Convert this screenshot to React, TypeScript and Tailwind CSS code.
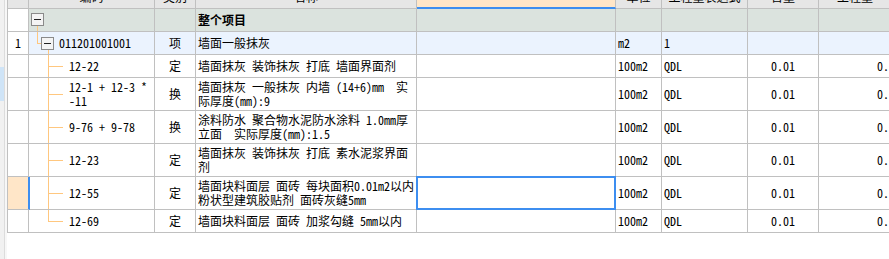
import React from "react";

type Row = {
  code: string[];
  type: string;
  name: string[];
  unit: string;
  expr: string;
  qty: string;
  last: string;
};

const children: Row[] = [
  { code: ["12-22"], type: "定", name: ["墙面抹灰 装饰抹灰 打底 墙面界面剂"], unit: "100m2", expr: "QDL", qty: "0.01", last: "0.01" },
  { code: ["12-1 + 12-3 *", "-11"], type: "换", name: ["墙面抹灰 一般抹灰 内墙 (14+6)mm  实", "际厚度(mm):9"], unit: "100m2", expr: "QDL", qty: "0.01", last: "0.01" },
  { code: ["9-76 + 9-78"], type: "换", name: ["涂料防水 聚合物水泥防水涂料 1.0mm厚", "立面  实际厚度(mm):1.5"], unit: "100m2", expr: "QDL", qty: "0.01", last: "0.01" },
  { code: ["12-23"], type: "定", name: ["墙面抹灰 装饰抹灰 打底 素水泥浆界面", "剂"], unit: "100m2", expr: "QDL", qty: "0.01", last: "0.01" },
  { code: ["12-55"], type: "定", name: ["墙面块料面层 面砖 每块面积0.01m2以内", "粉状型建筑胶贴剂 面砖灰缝5mm"], unit: "100m2", expr: "QDL", qty: "0.01", last: "0.01" },
  { code: ["12-69"], type: "定", name: ["墙面块料面层 面砖 加浆勾缝 5mm以内"], unit: "100m2", expr: "QDL", qty: "0.01", last: "0.01" },
];

const cell = "border-r border-b border-[#c0c0c0] flex items-center whitespace-pre overflow-hidden shrink-0";

function Lines({ lines }: { lines: string[] }) {
  return (
    <div className="flex flex-col">
      {lines.map((l) => (
        <span key={l} className="h-[14px] leading-[14px]">{l}</span>
      ))}
    </div>
  );
}

function MinusBox({ className }: { className: string }) {
  return (
    <div className={`absolute z-20 h-[13px] w-[13px] border border-[#8a8a8a] bg-[#f4f4f4] flex items-center justify-center ${className}`}>
      <div className="h-px w-[7px] bg-[#222]" />
    </div>
  );
}

export default function App() {
  return (
    <div className="flex h-[259px] w-[889px] overflow-hidden bg-white font-['Noto_Sans_Mono_CJK_SC','Noto_Sans_CJK_SC',monospace] text-[12px] leading-[14px] text-black">
      {/* left side strip */}
      <div className="flex shrink-0">
        <div className="flex w-[4px] flex-col bg-[#f1f1f1]">
          <div className="h-[67px]" />
          <div className="h-[34px] bg-[#cfe4f7]" />
        </div>
        <div className="w-px bg-[#dcdcdc]" />
        <div className="w-[2px] bg-[#f7f7f7]" />
      </div>

      <div className="flex flex-col self-start border-l border-[#c0c0c0] -mt-[15px]">
        {/* header */}
        <div className="flex h-[24px] bg-[#e6e6e6]">
          <div className={`${cell} w-[21px]`} />
          <div className={`${cell} w-[126px] justify-center`}>编码</div>
          <div className={`${cell} w-[41px] justify-center`}>类别</div>
          <div className={`${cell} w-[221px] justify-center`}>名称</div>
          <div className="flex w-[199px] shrink-0 border-r border-b-2 border-r-[#c0c0c0] border-b-[#3d8ef0] bg-[#ffe6c8]" />
          <div className={`${cell} w-[46px] justify-center`}>单位</div>
          <div className={`${cell} w-[86px] justify-center`}>工程量表达式</div>
          <div className={`${cell} w-[71px] justify-center`}>含量</div>
          <div className={`${cell} w-[88px] pl-[18px]`}>工程量</div>
        </div>

        {/* root row */}
        <div className="flex h-[23px]">
          <div className={`${cell} w-[21px]`} />
          <div className={`${cell} relative w-[126px] bg-[#dbe3de]`}>
            <MinusBox className="left-[2px] top-[4px]" />
            <div className="absolute left-[8px] top-[16px] -bottom-px z-10 w-px bg-[#ffc77f]" />
          </div>
          <div className={`${cell} w-[41px] bg-[#dbe3de]`} />
          <div className={`${cell} w-[221px] bg-[#dbe3de] pl-[2px] font-bold`}>整个项目</div>
          <div className={`${cell} w-[199px] bg-[#dbe3de]`} />
          <div className={`${cell} w-[46px] bg-[#dbe3de]`} />
          <div className={`${cell} w-[86px] bg-[#dbe3de]`} />
          <div className={`${cell} w-[71px] bg-[#dbe3de]`} />
          <div className={`${cell} w-[88px] bg-[#dbe3de]`} />
        </div>

        {/* list item row */}
        <div className="flex h-[23px]">
          <div className={`${cell} w-[21px] justify-center`}>1</div>
          <div className={`${cell} relative w-[126px] bg-[#ebf3fe] pl-[30px]`}>
            <div className="absolute left-[8px] top-0 h-[12px] w-px bg-[#ffc77f]" />
            <div className="absolute left-[8px] top-[11px] h-px w-[5px] bg-[#ffc77f]" />
            <MinusBox className="left-[12px] top-[5px]" />
            <div className="absolute left-[19px] top-[17px] -bottom-px z-10 w-px bg-[#ffc77f]" />
            011201001001
          </div>
          <div className={`${cell} w-[41px] justify-center bg-[#ebf3fe]`}>项</div>
          <div className={`${cell} w-[221px] bg-[#ebf3fe] pl-[2px]`}>墙面一般抹灰</div>
          <div className={`${cell} w-[199px] bg-[#ebf3fe]`} />
          <div className={`${cell} w-[46px] bg-[#ebf3fe] pl-[2px]`}>m2</div>
          <div className={`${cell} w-[86px] bg-[#ebf3fe] pl-[2px]`}>1</div>
          <div className={`${cell} w-[71px] bg-[#ebf3fe]`} />
          <div className={`${cell} w-[88px] bg-[#ebf3fe]`} />
        </div>

        {children.map((r, i) => {
          const tall = r.name.length > 1 || r.code.length > 1;
          const selected = i === 4;
          const lastChild = i === children.length - 1;
          return (
            <div key={i} className={`flex ${tall ? "h-[33px]" : "h-[23px]"}`}>
              <div
                className={`${cell} w-[21px] ${selected ? "bg-[#ffe6c8] border-r-2 border-r-[#3d8ef0] w-[22px] -mr-px relative z-10" : ""}`}
              />
              <div className={`${cell} relative w-[126px] pl-[40px]`}>
                <div
                  className={`absolute left-[19px] top-0 z-10 w-px bg-[#ffc77f] ${lastChild ? "h-1/2" : "-bottom-px"}`}
                />
                <div className="absolute left-[19px] top-1/2 h-px w-[15px] bg-[#ffc77f]" />
                <Lines lines={r.code} />
              </div>
              <div className={`${cell} w-[41px] justify-center`}>{r.type}</div>
              <div className={`${cell} w-[221px] pl-[2px]`}>
                <Lines lines={r.name} />
              </div>
              <div className={`${cell} relative w-[199px] !overflow-visible`}>
                {selected && (
                  <div className="absolute -left-px -top-px -right-px -bottom-px z-20 border-2 border-[#3d8ef0]" />
                )}
              </div>
              <div className={`${cell} w-[46px] pl-[2px]`}>{r.unit}</div>
              <div className={`${cell} w-[86px] pl-[2px]`}>{r.expr}</div>
              <div className={`${cell} w-[71px] justify-center`}>{r.qty}</div>
              <div className={`${cell} w-[88px] pl-[58px]`}>{r.last}</div>
            </div>
          );
        })}
      </div>
    </div>
  );
}
